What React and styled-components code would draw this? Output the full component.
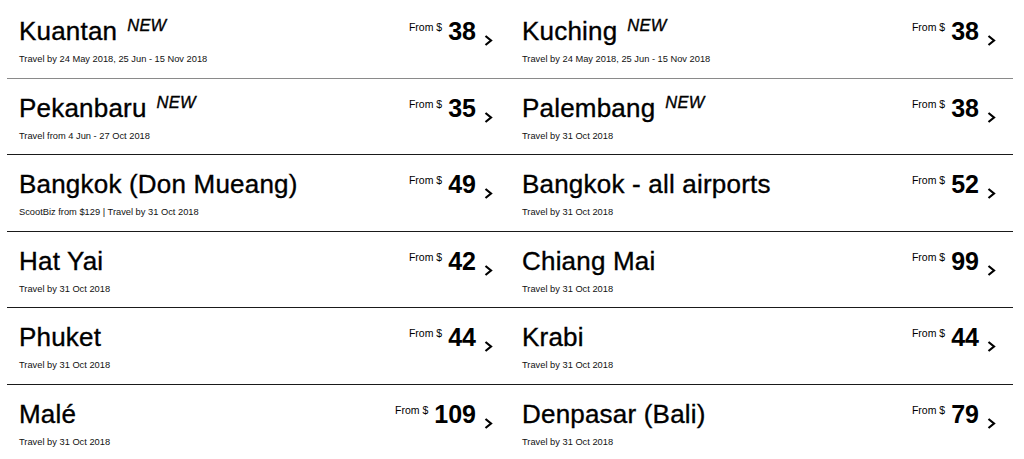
import React from "react";
import styled, { createGlobalStyle } from "styled-components";

const Global = createGlobalStyle`
  html, body { margin: 0; padding: 0; background: #fff; }
  body { font-family: "Liberation Sans", Arial, sans-serif; color: #000; }
`;

const Grid = styled.div`
  display: grid;
  grid-template-columns: 503px 503px;
  grid-auto-rows: 76.5px;
  margin-left: 7px;
  padding-top: 2px;
`;

const Row = styled.a`
  box-sizing: border-box;
  display: flex;
  justify-content: space-between;
  align-items: flex-start;
  padding: 13px 17px 0 12px;
  border-bottom: 1px solid ${(p) => (p.$last ? "transparent" : p.$first ? "#8a8a8a" : "#1a1a1a")};
  color: #000;
  text-decoration: none;
`;

const Info = styled.div`
  display: flex;
  flex-direction: column;
`;

const Title = styled.div`
  font-size: 26px;
  line-height: 32px;
  font-weight: 400;
  -webkit-text-stroke: 0.35px #000;
  letter-spacing: 0.2px;
  white-space: nowrap;
`;

const New = styled.sup`
  font-size: 16.5px;
  font-style: italic;
  margin-left: 10px;
  vertical-align: 9px;
  line-height: 0;
`;

const Sub = styled.div`
  margin-top: 6px;
  font-size: 9.3px;
  line-height: 12px;
  color: #111;
  white-space: nowrap;
`;

const Price = styled.div`
  display: flex;
  align-items: flex-start;
`;

const From = styled.span`
  font-size: 10.5px;
  line-height: 12px;
  margin-top: 6px;
  margin-right: 6px;
`;

const Amount = styled.span`
  font-size: 25px;
  line-height: 32px;
  font-weight: 700;
`;

const Chevron = styled.svg`
  width: 9px;
  height: 13px;
  margin-top: 19px;
  margin-left: 8px;
`;

const data = [
  ["Kuantan", true, "Travel by 24 May 2018, 25 Jun - 15 Nov 2018", "38"],
  ["Kuching", true, "Travel by 24 May 2018, 25 Jun - 15 Nov 2018", "38"],
  ["Pekanbaru", true, "Travel from 4 Jun - 27 Oct 2018", "35"],
  ["Palembang", true, "Travel by 31 Oct 2018", "38"],
  ["Bangkok (Don Mueang)", false, "ScootBiz from $129 | Travel by 31 Oct 2018", "49"],
  ["Bangkok - all airports", false, "Travel by 31 Oct 2018", "52"],
  ["Hat Yai", false, "Travel by 31 Oct 2018", "42"],
  ["Chiang Mai", false, "Travel by 31 Oct 2018", "99"],
  ["Phuket", false, "Travel by 31 Oct 2018", "44"],
  ["Krabi", false, "Travel by 31 Oct 2018", "44"],
  ["Malé", false, "Travel by 31 Oct 2018", "109"],
  ["Denpasar (Bali)", false, "Travel by 31 Oct 2018", "79"],
];

export default function App() {
  return (
    <>
      <Global />
      <Grid>
        {data.map(([name, isNew, sub, price], i) => (
          <Row key={i} href="#" $first={i < 2} $last={i >= 10}>
            <Info>
              <Title>
                {name}
                {isNew && <New>NEW</New>}
              </Title>
              <Sub>{sub}</Sub>
            </Info>
            <Price>
              <From>From $</From>
              <Amount>{price}</Amount>
              <Chevron viewBox="0 0 9 13">
                <polyline points="1.5,2 7,6.5 1.5,11" fill="none" stroke="#000" strokeWidth="2.2" />
              </Chevron>
            </Price>
          </Row>
        ))}
      </Grid>
    </>
  );
}
